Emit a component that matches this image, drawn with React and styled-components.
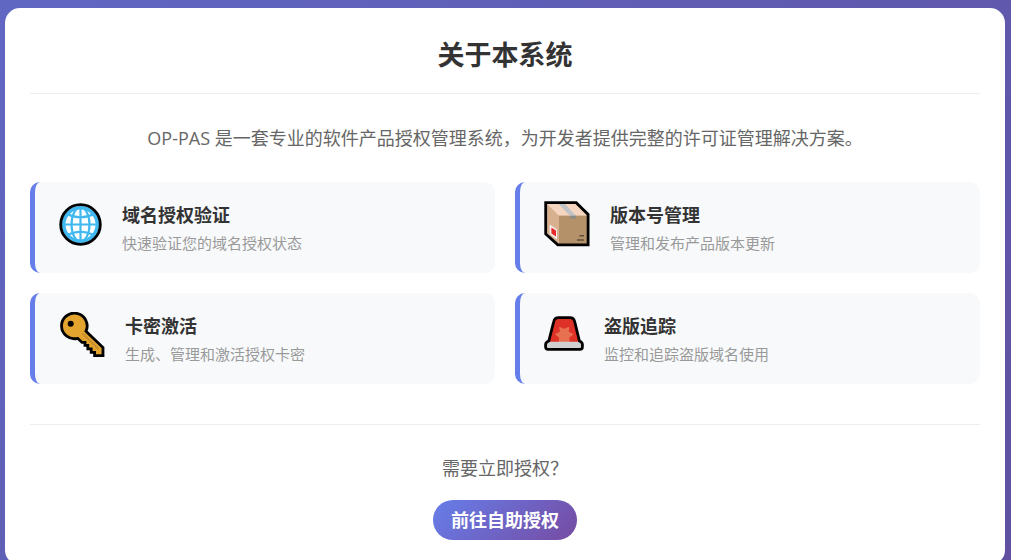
import React from 'react';
import styled, { createGlobalStyle } from 'styled-components';

const primary = '#667eea';
const secondary = '#764ba2';
const lightGrey = '#eeeeee';

const GlobalStyle = createGlobalStyle`
  * {
    box-sizing: border-box;
  }

  body {
    margin: 0;
    min-height: 100vh;
    font-family: "Open Sans", "Noto Sans CJK SC", sans-serif;
    color: #333;
    background: linear-gradient(135deg, #6067c3 0%, #60509f 100%);
  }
`;

const Page = styled.div`
  padding: 8px 6px 8px 5px;
`;

const Panel = styled.main`
  max-width: 1000px;
  margin: 0 auto;
  padding: 25px;
  border-radius: 15px;
  background-color: white;
`;

const Title = styled.h2`
  margin: 0 0 29px;
  padding-bottom: 17px;
  border-bottom: 1px solid ${lightGrey};
  font-size: 27px;
  line-height: 43px;
  text-align: center;
`;

const Intro = styled.p`
  margin: 0 0 29px;
  font-size: 18px;
  line-height: 30px;
  color: #666;
  text-align: center;
`;

const Features = styled.ul`
  display: grid;
  grid-template-columns: repeat(2, 1fr);
  gap: 20px;
  margin: 0 0 40px;
  padding: 0;
  list-style: none;

  @media (max-width: 640px) {
    grid-template-columns: 1fr;
  }
`;

const Feature = styled.li`
  display: flex;
  gap: 20px;
  padding: 19px 24px 16px;
  border-left: 5px solid ${primary};
  border-radius: 10px;
  background-color: #f8f9fb;
`;

const FeatureIcon = styled.span`
  display: flex;
  align-items: center;
  flex: none;
  height: 46px;
`;

const FeatureName = styled.h3`
  margin: 0;
  font-size: 18px;
  line-height: 28px;
`;

const FeatureText = styled.p`
  margin: 0;
  font-size: 15px;
  line-height: 28px;
  color: #999;
`;

const Footer = styled.footer`
  padding-top: 28px;
  border-top: 1px solid ${lightGrey};
  text-align: center;
`;

const Question = styled.p`
  margin: 0 0 17px;
  font-size: 18px;
  line-height: 30px;
  color: #666;
`;

const LinkButton = styled.a`
  display: inline-block;
  padding: 5px 18px;
  border-radius: 20px;
  font-size: 18px;
  font-weight: bold;
  line-height: 30px;
  vertical-align: top;
  color: white;
  text-decoration: none;
  background: linear-gradient(135deg, ${primary} 0%, ${secondary} 100%);
`;

const GlobeIcon = () => (
  <svg width="43" height="43" viewBox="0 0 43 43" fill="none" aria-hidden="true">
    <circle cx="21.5" cy="21.5" r="19.8" fill="white" />
    <g stroke="#41b8f0" strokeWidth="2.2">
      <circle cx="21.5" cy="21.5" r="16.8" strokeWidth="3.6" />
      <ellipse cx="21.5" cy="21.5" rx="9" ry="17" />
      <path d="M21.5 4v35M4 21.5h35" />
      <path d="M7 10.5Q21.5 18 36 10.5M7 32.5Q21.5 25 36 32.5" />
    </g>
    <circle cx="21.5" cy="21.5" r="19.8" stroke="black" strokeWidth="2.8" />
  </svg>
);

const BoxIcon = () => (
  <svg width="46" height="46" viewBox="0 0 46 46" aria-hidden="true">
    <path d="M1.5 1.5H32L44 13.5V44H13.5L1.5 33z" fill="#d7b18f" />
    <path d="M1.5 1.5H32L44 14.7H15z" fill="#f5d5c0" />
    <path d="M15 14.7H44V44H15z" fill="#b5916a" />
    <path d="M14.5 3H21L32 14.7H26z" fill="#bfc2c6" />
    <path d="M26 14.7H32V17.6H26z" fill="#8c8b88" />
    <path d="M5.7 23.5L13 28.5V38.5L5.7 33z" fill="#f3f0ee" />
    <path d="M7.4 26.5L12 29.6V35.6L7.4 32.5z" fill="#ea2a2a" />
    <path d="M35.5 34.8h4.5M33 39h7" stroke="#5f4c38" strokeWidth="1.5" />
    <path d="M1.7 1.7H32.2L44.1 13.4V43.9H13.8L1.7 33z" fill="none" stroke="black" strokeWidth="2.8" />
  </svg>
);

const KeyIcon = () => (
  <svg width="46" height="46" viewBox="0 0 46 46" aria-hidden="true">
    <path
      d="M27 19.2L44 35.6V43.6H35.6V40.4H32.2V36.8H28.8V33.4H26V30.4H23L18.6 26.3A12.8 12.8 0 1 1 27 19.2z"
      fill="#e2a42e"
      stroke="black"
      strokeWidth="2.8"
    />
    <path d="M23.5 21.5L39.5 37" stroke="#c78f2b" strokeWidth="1.8" />
    <circle cx="11.7" cy="11.7" r="3" />
  </svg>
);

const SirenIcon = () => (
  <svg width="40" height="38" viewBox="0 0 40 38" aria-hidden="true">
    <path d="M5 26L9.6 6Q10.6 1.6 14.5 1.6H26Q29.8 1.6 30.8 6L35.4 26z" fill="#de3128" />
    <path
      d="M10.8 18.2L15.8 15.8L15.2 10.8L20.2 12.8L25.2 10.8L24.8 15.8L29.6 18.2L25.4 21.6L25.6 26H14.8L15 21.6z"
      fill="#e6704f"
    />
    <path d="M3.5 25.7H36.5L38 27.5V33H2V27.5z" fill="#d0d0d0" />
    <path
      d="M4.8 25L9.6 6Q10.6 1.6 14.5 1.6H26Q29.8 1.6 30.8 6L35.4 25Q38.4 26 38.4 28.6V31Q38.4 33.4 36 33.4H4Q1.6 33.4 1.6 31V28.6Q1.6 26 4.8 25z"
      fill="none"
      stroke="black"
      strokeWidth="2.8"
    />
  </svg>
);

const features = [
  { icon: <GlobeIcon />, name: '域名授权验证', text: '快速验证您的域名授权状态' },
  { icon: <BoxIcon />, name: '版本号管理', text: '管理和发布产品版本更新' },
  { icon: <KeyIcon />, name: '卡密激活', text: '生成、管理和激活授权卡密' },
  { icon: <SirenIcon />, name: '盗版追踪', text: '监控和追踪盗版域名使用' },
];

const App = () => (
  <>
    <GlobalStyle />
    <Page lang="zh-CN">
      <Panel>
        <Title>关于本系统</Title>
        <Intro>OP-PAS 是一套专业的软件产品授权管理系统，为开发者提供完整的许可证管理解决方案。</Intro>
        <Features>
          {features.map(({ icon, name, text }) => (
            <Feature key={name}>
              <FeatureIcon>{icon}</FeatureIcon>
              <div>
                <FeatureName>{name}</FeatureName>
                <FeatureText>{text}</FeatureText>
              </div>
            </Feature>
          ))}
        </Features>
        <Footer>
          <Question>需要立即授权？</Question>
          <LinkButton href="#auth">前往自助授权</LinkButton>
        </Footer>
      </Panel>
    </Page>
  </>
);

export default App;
